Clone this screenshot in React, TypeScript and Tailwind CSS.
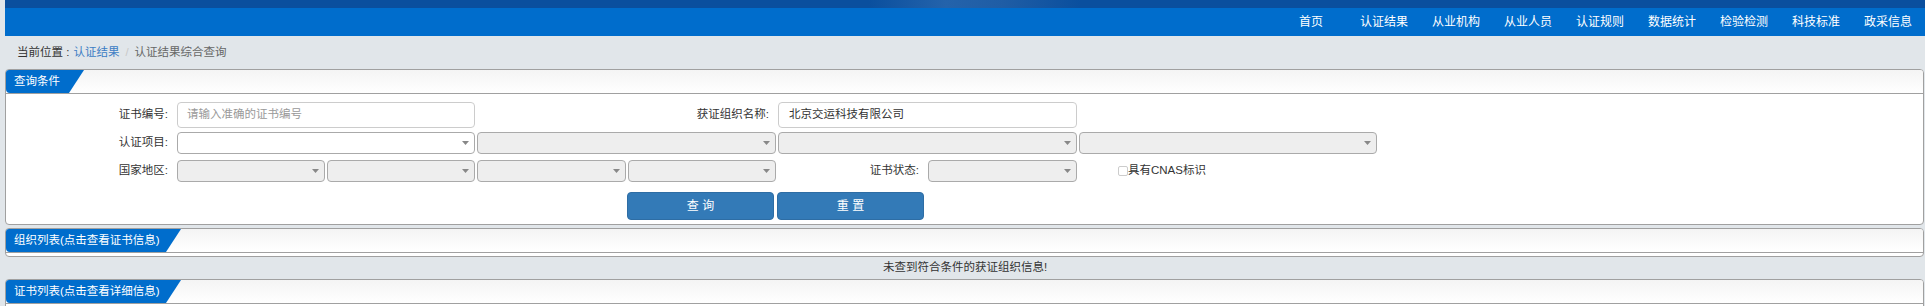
import React from 'react';

// ==================== SMALL PARTS ====================
const NAV = ['认证结果', '从业机构', '从业人员', '认证规则', '数据统计', '检验检测', '科技标准', '政采信息'];

function Arrow() {
  return (
    <svg width="7" height="4" viewBox="0 0 7 4" className="shrink-0">
      <path d="M0 0h7L3.5 4z" fill="#888" />
    </svg>
  );
}

interface SelectProps {
  w: string;
  disabled?: boolean;
  className?: string;
}

function FakeSelect({ w, disabled, className = '' }: SelectProps) {
  return (
    <div
      className={`${w} h-[22px] rounded-[4px] border border-[#aaa] flex items-center justify-end pr-[5px] ${
        disabled ? 'bg-[#eee]' : 'bg-white'
      } ${className}`}
    >
      <Arrow />
    </div>
  );
}

function Label({ w, text }: { w: string; text: string }) {
  return <div className={`${w} shrink-0 text-right pr-[9px] text-[#333]`}>{text}</div>;
}

function Panel({ title, tabW, children, className = '' }: { title: string; tabW: string; children?: React.ReactNode; className?: string }) {
  return (
    <div className={`mr-[1px] rounded-[4px] border border-[#a0a0a0] bg-white overflow-hidden ${className}`}>
      <div className="h-[24px] border-b border-[#a0a0a0] bg-gradient-to-b from-[#f4f4f4] to-white flex">
        <div
          className={`${tabW} h-full bg-[#006dcc] text-white pl-[8px] flex items-center rounded-bl-[4px] [clip-path:polygon(0_0,100%_0,calc(100%-15px)_100%,0_100%)]`}
        >
          {title}
        </div>
      </div>
      {children}
    </div>
  );
}

// ==================== PAGE ====================
export default function App() {
  return (
    <div className="min-h-screen bg-[#e1e6ea] pl-[5px] font-['Liberation_Sans','Noto_Sans_CJK_SC',sans-serif] text-[11.5px]">
      {/* top banner strip */}
      <div className="h-[8px] bg-[linear-gradient(90deg,#0a4f9e_0%,#0a4f9e_45%,#2463ab_49%,#1f5da5_52%,#0a4f9e_56%,#0a4f9e_100%)]" />
      <div className="h-[28px] bg-[#006dcc] flex justify-end pr-px text-[12px] text-white">
        <div className="w-[61px] pl-3 flex items-center">首页</div>
        {NAV.map((n) => (
          <div key={n} className="px-3 flex items-center">
            {n}
          </div>
        ))}
      </div>

      {/* breadcrumb */}
      <div className="h-[33px] flex items-center pl-[12px]">
        <span className="text-[#333]">当前位置 :</span>
        <span className="text-[#3c7dc4] ml-[4px]">认证结果</span>
        <span className="text-[#c8c8c8] mx-[6px]">/</span>
        <span className="text-[#666]">认证结果综合查询</span>
      </div>

      {/* query conditions */}
      <Panel title="查询条件" tabW="w-[78px]">
        <div className="pt-[8px] pb-[4px]">
          <div className="flex items-center h-[26px]">
            <Label w="w-[171px]" text="证书编号:" />
            <div className="w-[298px] h-[26px] rounded-[4px] border border-[#ccc] flex items-center pl-[9px] text-[#999]">
              请输入准确的证书编号
            </div>
            <Label w="w-[303px]" text="获证组织名称:" />
            <div className="w-[299px] h-[26px] rounded-[4px] border border-[#ccc] flex items-center pl-[10px] text-[#333]">
              北京交运科技有限公司
            </div>
          </div>

          <div className="flex items-center h-[22px] mt-[4px]">
            <Label w="w-[171px]" text="认证项目:" />
            <FakeSelect w="w-[298px]" />
            <FakeSelect w="w-[299px]" disabled className="ml-[2px]" />
            <FakeSelect w="w-[299px]" disabled className="ml-[2px]" />
            <FakeSelect w="w-[298px]" disabled className="ml-[2px]" />
          </div>

          <div className="flex items-center h-[22px] mt-[6px]">
            <Label w="w-[171px]" text="国家地区:" />
            <FakeSelect w="w-[148px]" disabled />
            <FakeSelect w="w-[148px]" disabled className="ml-[2px]" />
            <FakeSelect w="w-[149px]" disabled className="ml-[2px]" />
            <FakeSelect w="w-[148px]" disabled className="ml-[2px]" />
            <Label w="w-[152px]" text="证书状态:" />
            <FakeSelect w="w-[149px]" disabled />
            <div className="ml-[41px] w-[10px] h-[10px] rounded-[2px] border border-[#ccc] bg-white" />
            <span className="text-[#333]">具有CNAS标识</span>
          </div>

          <div className="flex mt-[10px] ml-[621px] text-[12px] text-white">
            <div className="w-[147px] h-[28px] rounded-[4px] bg-[#337ab7] border border-[#2e6da4] flex items-center justify-center">
              查 询
            </div>
            <div className="w-[147px] h-[28px] ml-[3px] rounded-[4px] bg-[#337ab7] border border-[#2e6da4] flex items-center justify-center">
              重 置
            </div>
          </div>
        </div>
      </Panel>

      {/* organisation list */}
      <Panel title="组织列表(点击查看证书信息)" tabW="w-[175px]" className="mt-[3px]">
        <div className="h-[3px]" />
      </Panel>
      <div className="h-[22px] flex items-center justify-center text-[#333]">未查到符合条件的获证组织信息!</div>

      {/* certificate list */}
      <Panel title="证书列表(点击查看详细信息)" tabW="w-[175px]">
        <div className="h-[20px]" />
      </Panel>
    </div>
  );
}
